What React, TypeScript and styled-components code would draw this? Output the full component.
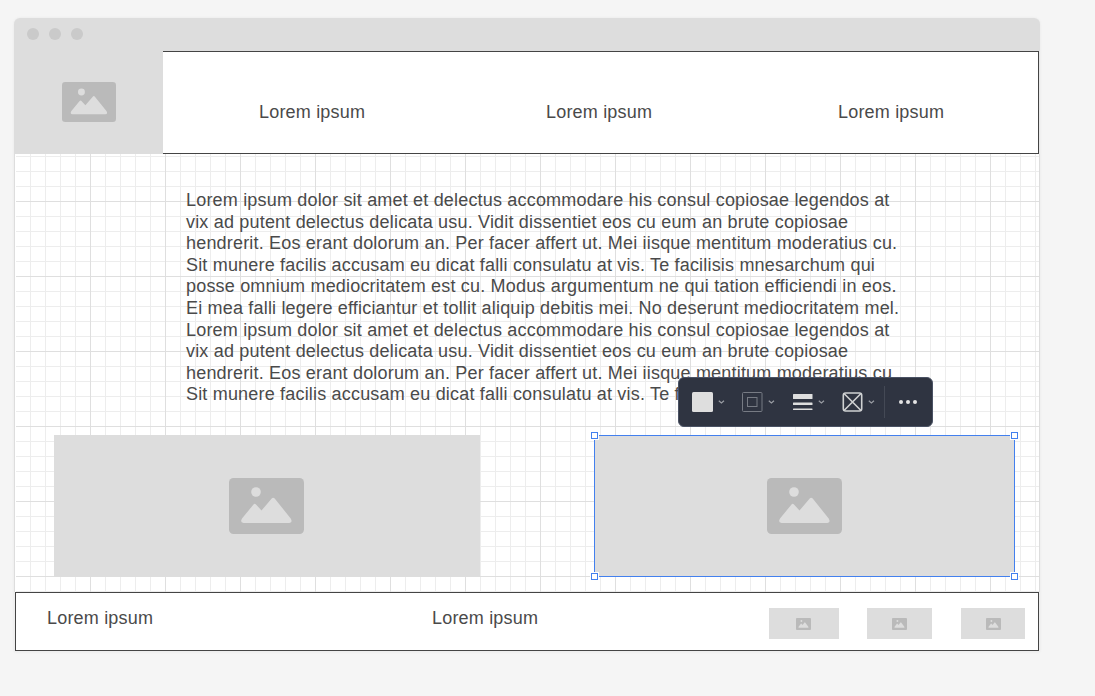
import React from 'react';
import styled, { createGlobalStyle } from 'styled-components';

const GlobalStyle = createGlobalStyle`
  * { box-sizing: border-box; }
  body {
    margin: 0;
    background: #f5f5f5;
    color: #4a4a4a;
    font-family: "Liberation Sans", Arial, sans-serif;
    font-size: 18px;
    letter-spacing: 0.185px;
    overflow: hidden;
  }
  svg { display: block; flex: none; }
`;

const Stage = styled.main`
  height: 696px;
  padding: 18px 0 0 14px;
`;

const Window = styled.div`
  position: relative;
  width: 1026px;
  height: 634px;
  display: flex;
  flex-direction: column;
  border-radius: 6px 6px 0 0;
  box-shadow: 0 0 3px rgba(0, 0, 0, 0.06);
  background: #eee;
`;

const TitleBar = styled.div`
  flex: none;
  height: 33px;
  padding: 10px 0 0 13px;
  display: flex;
  gap: 10px;
  background: #ddd;
  border-radius: 6px 6px 0 0;
`;

const Dot = styled.i`
  width: 12px;
  height: 12px;
  border-radius: 50%;
  background: #cacaca;
`;

const Header = styled.header`
  flex: none;
  height: 103px;
  display: flex;
  border-right: 1px solid #e8e8e8;
`;

const Picture = styled.div<{ $w: number; $h: number; $shift?: number; $lift?: number }>`
  flex: none;
  width: ${p => p.$w}px;
  height: ${p => p.$h}px;
  padding-right: ${p => p.$shift ?? 0}px;
  padding-bottom: ${p => p.$lift ?? 0}px;
  display: flex;
  align-items: center;
  justify-content: center;
  background: #ddd;
`;

const Nav = styled.nav`
  flex: 1;
  display: flex;
  padding: 50px 0 0 96px;
  border: solid #444;
  border-width: 1px 1px 1px 0;
  background: #fff;
`;

const Label = styled.span<{ $w: number }>`
  width: ${p => p.$w}px;
  line-height: 21px;
  white-space: nowrap;
`;

const Canvas = styled.section`
  flex: none;
  height: 438px;
  padding: 36px 0 0 39px;
  border: solid #ddd;
  border-width: 0 1px;
  background-color: #fff;
  background-image:
    linear-gradient(#fff, #fff),
    linear-gradient(90deg, #dfdfdf 1px, transparent 1px),
    linear-gradient(#dfdfdf 1px, transparent 1px),
    linear-gradient(90deg, #ededed 1px, transparent 1px),
    linear-gradient(#ededed 1px, transparent 1px);
  background-size: 1px 100%, 75px 75px, 75px 75px, 15px 15px, 15px 15px;
  background-position: 0 0, 0 47px, 0 47px, 0 2px, 0 2px;
  background-repeat: no-repeat, repeat, repeat, repeat, repeat;
`;

const Copy = styled.p`
  margin: 0 0 0 132px;
  height: 245px;
  line-height: 21.6px;
  white-space: pre;
`;

const PictureRow = styled.div`
  display: flex;
  gap: 114px;
`;

const Selection = styled.div`
  position: relative;
  &::after {
    content: '';
    position: absolute;
    inset: 0;
    border: 1px solid #4380ee;
  }
`;

const Handle = styled.b<{ $right?: boolean; $bottom?: boolean }>`
  position: absolute;
  z-index: 1;
  ${p => (p.$right ? 'right' : 'left')}: -3px;
  ${p => (p.$bottom ? 'bottom' : 'top')}: -3px;
  width: 7px;
  height: 7px;
  border: 1px solid #4380ee;
  background: #fff;
  box-shadow: 0 0 0 1px #fff;
`;

const Footer = styled.footer`
  flex: none;
  width: 1024px;
  height: 59px;
  margin-left: 1px;
  padding: 15px 0 0 31px;
  display: flex;
  border: 1px solid #444;
  background: #fff;
`;

const Thumbs = styled.div`
  display: flex;
  padding-left: 1px;
`;

const Thumb = styled(Picture)<{ $gap: number }>`
  margin-right: ${p => p.$gap}px;
`;

const Toolbar = styled.div`
  position: absolute;
  z-index: 2;
  left: 663.5px;
  top: 359px;
  width: 255px;
  height: 50px;
  display: flex;
  align-items: center;
  padding-left: 13.5px;
  border: 1px solid #4a5264;
  border-radius: 6px;
  background: #2f3441;
`;

const Tool = styled.div`
  width: 50px;
  display: flex;
  align-items: center;
  gap: 5px;
`;

const Divider = styled.div`
  width: 1px;
  height: 32px;
  margin-left: -8px;
  background: #444955;
`;

const More = styled.div`
  display: flex;
  gap: 3px;
  margin-left: 13.5px;
`;

const MoreDot = styled.i`
  width: 4px;
  height: 4px;
  border-radius: 50%;
  background: #e4e4e4;
`;

function ImageIcon({ width, height }: { width: number; height: number }) {
  return (
    <svg width={width} height={height} viewBox="0 0 75 56" preserveAspectRatio="none">
      <rect width="75" height="56" rx="4.5" fill="#bababa" />
      <circle cx="27" cy="14" r="4.8" fill="#ddd" />
      <path
        d="M13 40.5 24.5 26.5Q25.7 25 27 26.5L32.5 32.5 42.7 20.5Q44.2 18.8 45.7 20.5L61.7 40.5Q64 44.5 60.5 45H14.5Q10.7 44.5 13 40.5Z"
        fill="#ddd"
      />
    </svg>
  );
}

function Chevron() {
  return (
    <svg width="8" height="6" viewBox="0 0 8 6" fill="none" stroke="#9a9da4" strokeWidth="1.2">
      <path d="m.8 1.8 2.6 2.2L6 1.8" />
    </svg>
  );
}

const lines = [
  'Lorem ipsum dolor sit amet et delectus accommodare his consul copiosae legendos at',
  'vix ad putent delectus delicata usu. Vidit dissentiet eos cu eum an brute copiosae',
  'hendrerit. Eos erant dolorum an. Per facer affert ut. Mei iisque mentitum moderatius cu.',
  'Sit munere facilis accusam eu dicat falli consulatu at vis. Te facilisis mnesarchum qui',
  'posse omnium mediocritatem est cu. Modus argumentum ne qui tation efficiendi in eos.',
  'Ei mea falli legere efficiantur et tollit aliquip debitis mei. No deserunt mediocritatem mel.',
  'Lorem ipsum dolor sit amet et delectus accommodare his consul copiosae legendos at',
  'vix ad putent delectus delicata usu. Vidit dissentiet eos cu eum an brute copiosae',
  'hendrerit. Eos erant dolorum an. Per facer affert ut. Mei iisque mentitum moderatius cu',
  'Sit munere facilis accusam eu dicat falli consulatu at vis. Te f',
];

export default function App() {
  return (
    <Stage>
      <GlobalStyle />
      <Window>
        <TitleBar><Dot /><Dot /><Dot /></TitleBar>
        <Header>
          <Picture $w={149} $h={103} $lift={1}><ImageIcon width={54} height={40} /></Picture>
          <Nav>
            <Label $w={287}>Lorem ipsum</Label>
            <Label $w={292}>Lorem ipsum</Label>
            <Label $w={110}>Lorem ipsum</Label>
          </Nav>
        </Header>
        <Canvas>
          <Copy>{lines.join('\n')}</Copy>
          <PictureRow>
            <Picture $w={426} $h={142} $shift={1}><ImageIcon width={75} height={56} /></Picture>
            <Selection>
              <Picture $w={421} $h={142}><ImageIcon width={75} height={56} /></Picture>
              <Handle /><Handle $right /><Handle $bottom /><Handle $right $bottom />
            </Selection>
          </PictureRow>
        </Canvas>
        <Footer>
          <Label $w={385}>Lorem ipsum</Label>
          <Label $w={336}>Lorem ipsum</Label>
          <Thumbs>
            <Thumb $w={70} $h={31} $gap={28} $shift={1}><ImageIcon width={15} height={12} /></Thumb>
            <Thumb $w={65} $h={31} $gap={29}><ImageIcon width={15} height={12} /></Thumb>
            <Thumb $w={64} $h={31} $gap={0}><ImageIcon width={15} height={12} /></Thumb>
          </Thumbs>
        </Footer>
        <Toolbar>
          <Tool>
            <svg width="21" height="20"><rect width="21" height="20" rx="1.5" fill="#dedede" /></svg>
            <Chevron />
          </Tool>
          <Tool>
            <svg width="21" height="20" fill="none" stroke="#777b84">
              <rect x=".5" y=".5" width="19.5" height="19" rx="1" />
              <rect x="5.5" y="5.5" width="9.5" height="9" />
            </svg>
            <Chevron />
          </Tool>
          <Tool>
            <svg width="21" height="20" fill="#dedede">
              <rect x="1" y="2" width="19.5" height="5" rx=".5" />
              <rect x="1" y="10.5" width="19.5" height="2.5" rx=".5" />
              <rect x="1" y="16.5" width="19.5" height="1.4" rx=".5" />
            </svg>
            <Chevron />
          </Tool>
          <Tool>
            <svg width="21" height="20" fill="none" stroke="#cfd1d2" strokeWidth="1.6">
              <rect x="1.3" y="1" width="18.4" height="18" rx="2.2" />
              <path d="m2 1.5 17 17M19 1.5l-17 17" />
            </svg>
            <Chevron />
          </Tool>
          <Divider />
          <More><MoreDot /><MoreDot /><MoreDot /></More>
        </Toolbar>
      </Window>
    </Stage>
  );
}
